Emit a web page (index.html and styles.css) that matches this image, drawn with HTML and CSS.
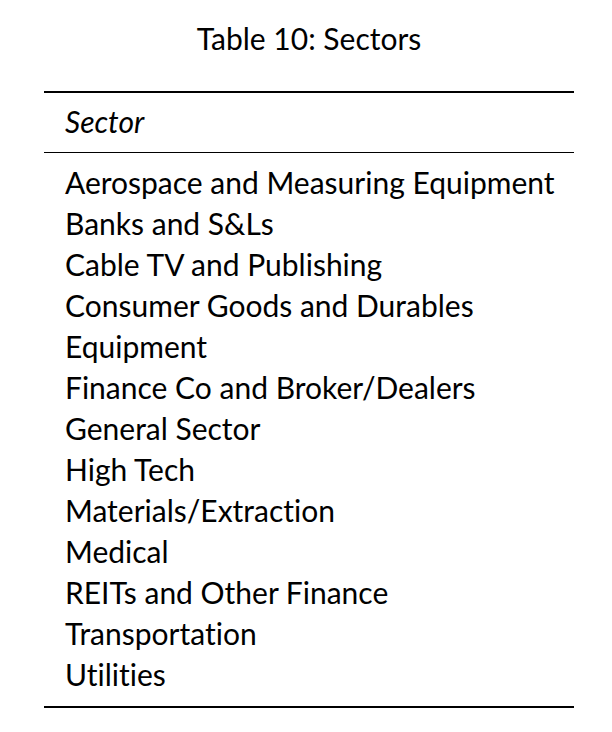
FILE: index.html
```html
<!DOCTYPE html>
<html>
<head>
<meta charset="utf-8">
<link rel="stylesheet" href="styles.css">
</head>
<body>
<div class="page">
  <div class="caption">Table 10: Sectors</div>
  <table class="tbl">
    <thead>
      <tr><th>Sector</th></tr>
    </thead>
    <tbody>
      <tr class="first"><td>Aerospace and Measuring Equipment</td></tr>
      <tr><td>Banks and S&amp;Ls</td></tr>
      <tr><td>Cable TV and Publishing</td></tr>
      <tr><td>Consumer Goods and Durables</td></tr>
      <tr><td>Equipment</td></tr>
      <tr><td>Finance Co and Broker/Dealers</td></tr>
      <tr><td>General Sector</td></tr>
      <tr><td>High Tech</td></tr>
      <tr><td>Materials/Extraction</td></tr>
      <tr><td>Medical</td></tr>
      <tr><td>REITs and Other Finance</td></tr>
      <tr><td>Transportation</td></tr>
      <tr class="last"><td>Utilities</td></tr>
    </tbody>
  </table>
</div>
</body>
</html>
```

FILE: styles.css
```css
html, body {
  margin: 0;
  padding: 0;
  background: #fff;
}
body {
  font-family: "Lato", "Open Sans", sans-serif;
  color: #000;
  font-variant-ligatures: none;
  font-feature-settings: "liga" 0, "clig" 0;
}
.page {
  width: 612px;
  padding-top: 18px;
}
.caption {
  text-align: center;
  font-size: 30px;
  line-height: 40px;
  height: 73px;
  margin-left: 6px;
}
.tbl {
  margin-left: 44px;
  width: 530px;
  border-collapse: collapse;
  font-size: 30px;
}
.tbl th {
  font-style: italic;
  font-weight: normal;
  text-align: left;
  line-height: 41px;
  padding: 8px 0 10px 21px;
  border-top: 2px solid #000;
  border-bottom: 1px solid #000;
}
.tbl td {
  line-height: 41px;
  padding: 0 0 0 21px;
}
.tbl tr.first td {
  padding-top: 9px;
}
.tbl tr.last td {
  padding-bottom: 11px;
  border-bottom: 2px solid #000;
}
```
